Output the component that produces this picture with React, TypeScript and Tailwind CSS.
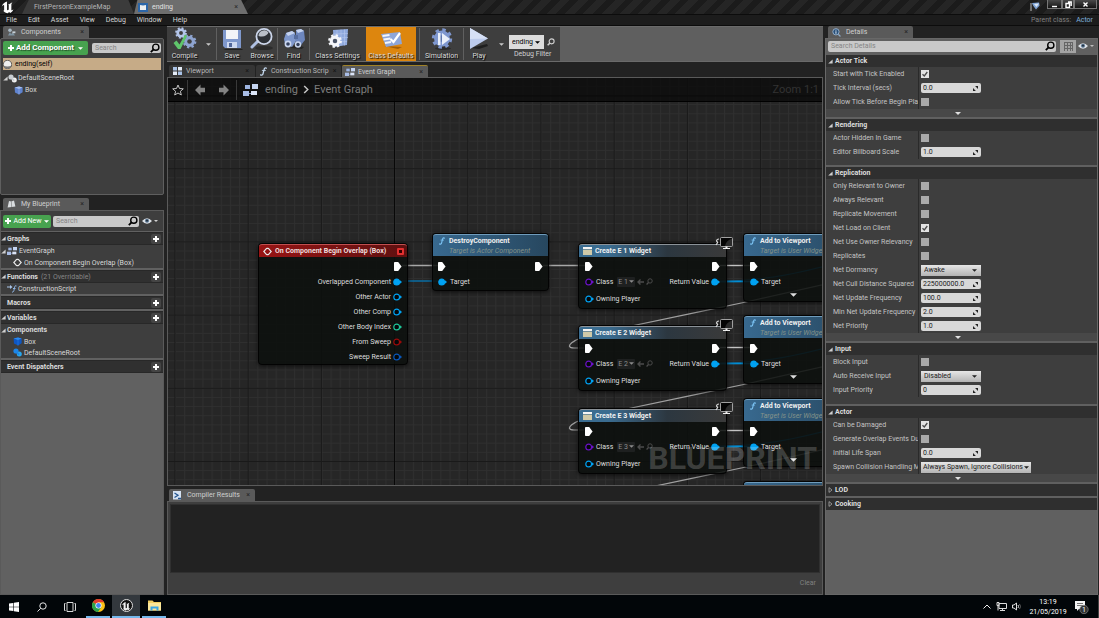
import type { ReactNode } from 'react'

const PIN_COLORS = {
  object: '#00a2f2',
  integer: '#1fc79a',
  boolean: '#9b0a0a',
  struct: '#0a57b8',
  class: '#6b12c9',
}

type PinKind = keyof typeof PIN_COLORS

interface Property {
  label: string
  kind: 'check' | 'number' | 'select'
  value?: string
  checked?: boolean
  wide?: boolean
}

const ACTOR_TICK: Property[] = [
  { label: 'Start with Tick Enabled', kind: 'check', checked: true },
  { label: 'Tick Interval (secs)', kind: 'number', value: '0.0' },
  { label: 'Allow Tick Before Begin Play', kind: 'check' },
]

const RENDERING: Property[] = [
  { label: 'Actor Hidden In Game', kind: 'check' },
  { label: 'Editor Billboard Scale', kind: 'number', value: '1.0' },
]

const REPLICATION: Property[] = [
  { label: 'Only Relevant to Owner', kind: 'check' },
  { label: 'Always Relevant', kind: 'check' },
  { label: 'Replicate Movement', kind: 'check' },
  { label: 'Net Load on Client', kind: 'check', checked: true },
  { label: 'Net Use Owner Relevancy', kind: 'check' },
  { label: 'Replicates', kind: 'check' },
  { label: 'Net Dormancy', kind: 'select', value: 'Awake' },
  { label: 'Net Cull Distance Squared', kind: 'number', value: '225000000.0' },
  { label: 'Net Update Frequency', kind: 'number', value: '100.0' },
  { label: 'Min Net Update Frequency', kind: 'number', value: '2.0' },
  { label: 'Net Priority', kind: 'number', value: '1.0' },
]

const INPUT: Property[] = [
  { label: 'Block Input', kind: 'check' },
  { label: 'Auto Receive Input', kind: 'select', value: 'Disabled' },
  { label: 'Input Priority', kind: 'number', value: '0' },
]

const ACTOR: Property[] = [
  { label: 'Can be Damaged', kind: 'check', checked: true },
  { label: 'Generate Overlap Events During Level Streaming', kind: 'check' },
  { label: 'Initial Life Span', kind: 'number', value: '0.0' },
  { label: 'Spawn Collision Handling Method', kind: 'select', value: 'Always Spawn, Ignore Collisions', wide: true },
]

/* ---------- small glyphs ---------- */

function Caret({ className = 'h-[3px] w-[6px]' }: { className?: string }) {
  return (
    <svg viewBox="0 0 6 3" className={`shrink-0 ${className}`} fill="currentColor" aria-hidden>
      <path d="M0 0h6L3 3z" />
    </svg>
  )
}

function Expanded() {
  return (
    <svg viewBox="0 0 5 5" className="size-[5px] shrink-0" fill="#cfcfcf" aria-hidden>
      <path d="M4.6.4v4.2H.2z" />
    </svg>
  )
}

function Collapsed() {
  return (
    <svg viewBox="0 0 5 6" className="h-[6px] w-[5px] shrink-0" fill="none" stroke="#a8a8a8" strokeWidth=".8" aria-hidden>
      <path d="M1 .6v4.8L4 3z" />
    </svg>
  )
}

function Magnifier({ className = 'size-[10px]' }: { className?: string }) {
  return (
    <svg viewBox="0 0 10 10" className={`shrink-0 ${className}`} fill="none" stroke="currentColor" aria-hidden>
      <circle cx="5.8" cy="4.2" r="3.1" strokeWidth="1.4" />
      <path d="M3.6 6.4L.8 9.2" strokeWidth="1.8" />
    </svg>
  )
}

function Eye() {
  return (
    <svg viewBox="0 0 10 6" className="h-[6px] w-[10px] shrink-0" aria-hidden>
      <path d="M0 3Q5-2.6 10 3 5 8.6 0 3z" fill="#dfe3e8" />
      <circle cx="5" cy="2.8" r="2" fill="#54708c" />
      <circle cx="5" cy="2.6" r=".9" fill="#1b2530" />
    </svg>
  )
}

function Plus() {
  return (
    <svg viewBox="0 0 6 6" className="size-[6px] shrink-0" fill="#fff" aria-hidden>
      <path d="M2 0h2v2h2v2H4v2H2V4H0V2h2z" />
    </svg>
  )
}

function GraphIcon({ className = 'h-[8px] w-[10px]' }: { className?: string }) {
  return (
    <svg viewBox="0 0 15 12" className={`shrink-0 ${className}`} aria-hidden>
      <path d="M2 3.5h5M4 9.5h6" stroke="#7d93bd" strokeWidth="1" />
      <rect x="2" y="1" width="5" height="4" fill="#9db4e0" />
      <rect x="9" y="0" width="6" height="5" fill="#c5d4f0" />
      <rect x="0" y="7" width="6" height="5" fill="#a9bde6" />
      <rect x="8" y="7" width="6" height="4" fill="#dbe4f7" />
    </svg>
  )
}

function ViewportIcon() {
  return (
    <svg viewBox="0 0 9 8" className="h-[8px] w-[9px] shrink-0" aria-hidden>
      <rect width="4" height="3.5" fill="#a9c2e6" />
      <rect x="5" width="4" height="3.5" fill="#e4ecf7" />
      <rect y="4.5" width="4" height="3.5" fill="#e4ecf7" />
      <rect x="5" y="4.5" width="4" height="3.5" fill="#a9c2e6" />
    </svg>
  )
}

function FunctionIcon({ color = '#a9cdf0', className = 'h-[9px] w-[7px]' }: { color?: string; className?: string }) {
  return (
    <svg viewBox="0 0 8 10" className={`shrink-0 ${className}`} fill="none" stroke={color} strokeLinecap="round" aria-hidden>
      <path d="M7.4 1.2C6 .2 5 1 4.6 3L3.5 7.4C3.1 9 2 9.7.7 8.9" strokeWidth="1.5" />
      <path d="M2.6 3.8h3.6" strokeWidth="1" />
    </svg>
  )
}

function EventIcon({ className = 'size-[9px]' }: { className?: string }) {
  return (
    <svg viewBox="0 0 10 10" className={`shrink-0 ${className}`} fill="none" stroke="#e8e8e8" strokeWidth="1.3" aria-hidden>
      <path d="M4 1.5L.9 5 4 8.5M6 1.5L9.1 5 6 8.5M4 1.5h2M4 8.5h2" />
    </svg>
  )
}

function BookIcon() {
  return (
    <svg viewBox="0 0 9 8" className="h-[8px] w-[9px] shrink-0" aria-hidden>
      <path d="M2 1l2.4.6L7 .6l1.4 6L4.6 7 .6 7.4z" fill="#d9dcdf" />
      <path d="M4.4 1.6L4.6 7" stroke="#777" strokeWidth=".6" />
    </svg>
  )
}

function ComponentsIcon() {
  return (
    <svg viewBox="0 0 9 8" className="h-[8px] w-[9px] shrink-0" aria-hidden>
      <path d="M1 7.4L3 4l1 2 2-1.4 2 2.8z" fill="#7e93a1" />
      <circle cx="3" cy="2.2" r="1.8" fill="#a9bac4" />
      <path d="M5.4 3.4h3v1.8h-3z" fill="#c7d0d6" />
    </svg>
  )
}

function InfoIcon() {
  return (
    <svg viewBox="0 0 10 10" className="size-[9px] shrink-0" aria-hidden>
      <circle cx="4.4" cy="4.2" r="3.5" fill="#284f78" stroke="#9cb7d3" />
      <path d="M4.4 2v.9M4.4 3.6v2.8" stroke="#e2ecf6" strokeWidth="1.1" />
      <path d="M7 7l2.4 2.4" stroke="#8ea9c4" strokeWidth="1.4" />
    </svg>
  )
}

function SceneRootIcon({ light, dark }: { light: string; dark: string }) {
  return (
    <svg viewBox="0 0 9 9" className="size-[9px] shrink-0" aria-hidden>
      <circle cx="3" cy="3" r="2.6" fill={light} />
      <circle cx="6.3" cy="6" r="2.5" fill={dark} />
      <path d="M3 3.6l3.2 3" stroke={light} strokeWidth="1.6" />
    </svg>
  )
}

function BoxIcon({ top, side }: { top: string; side: string }) {
  return (
    <svg viewBox="0 0 9 9" className="size-[9px] shrink-0" aria-hidden>
      <path d="M.6 1.6L5 .6l3.6 1v4.6L5 8.6 1 6.6z" fill={side} />
      <path d="M.6 1.6L5 .6l3.6 1L5 3z" fill={top} />
      <path d="M5 3v5.6" stroke={top} strokeWidth=".5" />
    </svg>
  )
}

function UnrealLogo({ className }: { className: string }) {
  return (
    <svg viewBox="0 0 20 20" className={className} fill="currentColor" aria-hidden>
      <path d="M9.4 2C5.6 3 2.4 6 1.6 9.6c1-1.6 2.2-2.8 3-2.6.5.1.6.6.6 1.3v6c0 .9-.6 1.1-1.3 1 1.6 2.2 4 3.5 6.6 3.6l1.7-1.7 1.7 1.4c2.2-1 3.8-3 4.5-5.3-.9.9-1.7 1.5-2.3 1.5-.4 0-.6-.3-.6-.8V6.6c0-1 .6-2 1.5-3-1.7.2-3.5 1.4-4.4 2.6-.3-.4-.9-.6-1.5-.6.5.5.7 1 .7 1.7v6.3c-.5.6-1.1 1-1.6 1-.6 0-.9-.4-.9-1.1V5.3C9.3 4.2 9 3 9.4 2z" />
    </svg>
  )
}

/* ---------- toolbar artwork ---------- */

function Gear({ x, y, r, fill, hole }: { x: number; y: number; r: number; fill: string; hole: string }) {
  const tooth = (2 * Math.PI * r) / 16
  return (
    <g>
      <circle cx={x} cy={y} r={r} fill={fill} />
      <circle cx={x} cy={y} r={r} fill="none" stroke={fill} strokeWidth={r * 0.55} strokeDasharray={`${tooth} ${tooth}`} />
      <circle cx={x} cy={y} r={r * 0.42} fill={hole} />
    </g>
  )
}

function CompileArt() {
  return (
    <svg viewBox="0 0 26 24" className="h-6 w-[26px]" aria-hidden>
      <Gear x={9} y={6} r={4.6} fill="#b4c6ea" hole="#3e3e3e" />
      <Gear x={17.5} y={14.5} r={5.4} fill="#8ea4d0" hole="#3e3e3e" />
      <path d="M1.5 16l3-2.5 3 4L13 7.5l2 1.5L8.5 22H6z" fill="#5fc56b" />
    </svg>
  )
}

function SaveArt() {
  return (
    <svg viewBox="0 0 24 24" className="size-6" aria-hidden>
      <path d="M3 22h19l1 1H6z" fill="#222" />
      <path d="M3 3h18v18H5l-2-2z" fill="#7f98cc" />
      <path d="M6 3h12v9H6z" fill="#f2f4f8" />
      <path d="M7 15h10v6H7z" fill="#cdd8ef" />
      <path d="M9 16h3v4H9z" fill="#51679a" />
    </svg>
  )
}

function BrowseArt() {
  return (
    <svg viewBox="0 0 24 24" className="size-6" aria-hidden>
      <ellipse cx="14" cy="21" rx="9" ry="2" fill="#2b2b2b" />
      <path d="M7.5 14.5L2 20" stroke="#aebfe2" strokeWidth="3" strokeLinecap="round" />
      <circle cx="14" cy="9.5" r="7.6" fill="#2c3036" stroke="#ccd6ea" strokeWidth="1.8" />
      <path d="M8.5 9a5.6 5.6 0 0110-3.5c-1 3-5 5-10 3.5z" fill="#b9bfc9" />
    </svg>
  )
}

// two barrels leaning to the left, lenses towards the viewer
function FindArt() {
  return (
    <svg viewBox="0 0 24 24" className="size-6" aria-hidden>
      <path d="M8 21l12 1 2-2-8-2z" fill="#262626" />
      <path d="M14 3l5-1 3 2 1 9-4 5-5-1z" fill="#6d86bd" />
      <path d="M14 3l5-1 3 2-6 2z" fill="#c4d2ef" />
      <path d="M4 6l6-2 3 2 1 8-4 6-7-3-1-5z" fill="#7e97cc" />
      <path d="M4 6l6-2 3 2-7 3z" fill="#c4d2ef" />
      <path d="M12 8h4v4h-4z" fill="#566d9f" />
      <circle cx="6" cy="17" r="3.4" fill="#c9d6ef" />
      <circle cx="6" cy="17" r="1.8" fill="#34415f" />
      <circle cx="16" cy="17.5" r="3.2" fill="#c9d6ef" />
      <circle cx="16" cy="17.5" r="1.7" fill="#34415f" />
    </svg>
  )
}

function SettingsArt() {
  return (
    <svg viewBox="0 0 24 24" className="size-6" aria-hidden>
      <path d="M7 3l15-1-1 16-13 2z" fill="#8fa9dd" />
      <path d="M11 3v16M15 2.5v16M18.5 2.5v16M7 7l15-.5M7 11l15-.5M8 15l13-.5" stroke="#b7c8ec" strokeWidth=".6" />
      <Gear x={9} y={14} r={5.4} fill="#f4f6fa" hole="#4a5468" />
    </svg>
  )
}

function DefaultsArt() {
  return (
    <svg viewBox="0 0 24 24" className="size-6" aria-hidden>
      <path d="M5 19l14 3 4-2z" fill="#a45f08" />
      <path d="M2 7l19-2 2 12-16 3z" fill="#8ea6d8" />
      <path d="M3.5 9l7-1M4.5 12.5l7-1M6 16l6-1" stroke="#f3f6fc" strokeWidth="1.8" />
      <path d="M11.5 12l3 3 6.5-9" fill="none" stroke="#fff" strokeWidth="2.2" />
    </svg>
  )
}

function SimulationArt() {
  return (
    <svg viewBox="0 0 24 24" className="size-6" aria-hidden>
      <ellipse cx="13" cy="21.5" rx="8" ry="1.5" fill="#2a2a2a" />
      <Gear x={12} y={11.5} r={8} fill="#7e97cf" hole="#5d76af" />
      <path d="M8 6h2.5v12H8zM12 6l8 6-8 6z" fill="#e9effa" />
    </svg>
  )
}

function PlayArt() {
  return (
    <svg viewBox="0 0 24 24" className="size-6" aria-hidden>
      <path d="M4 21l16-4 1 2-9 3z" fill="#1f1f1f" />
      <path d="M3 1l18 10.5L3 22z" fill="#bccbec" />
      <path d="M3 1l18 10.5L3 12z" fill="#d6e0f5" />
    </svg>
  )
}

/* ---------- shared panel parts ---------- */

function PanelTab({ icon, title, className }: { icon: ReactNode; title: string; className: string }) {
  return (
    <div className={`flex h-[12px] items-center gap-[5px] rounded-t-[2px] bg-[#5a5a5a] pl-1 pr-[5px] text-[#cfcfcf] ${className}`}>
      {icon}
      <span className="flex-1 whitespace-nowrap">{title}</span>
      <button type="button" aria-label={`Close ${title}`} className="text-[7px] leading-none text-[#252525]">
        ×
      </button>
    </div>
  )
}

function SearchBox({ placeholder, className }: { placeholder: string; className: string }) {
  return (
    <label className={`flex items-center rounded-[2px] bg-[#c9c9c9] pl-[3px] pr-px text-black ${className}`}>
      <input
        type="text"
        aria-label={placeholder}
        placeholder={placeholder}
        className="w-0 min-w-0 flex-1 bg-transparent outline-none placeholder:text-[#858585]"
      />
      <Magnifier />
    </label>
  )
}

/* ---------- left column ---------- */

function ComponentsPanel() {
  return (
    <section className="flex flex-col">
      <PanelTab icon={<ComponentsIcon />} title="Components" className="ml-[3px] w-[86px]" />
      <div className="h-[157px] rounded-[2px] border border-[#5f5f5f] bg-[#3e3e3e] p-[2px]">
        <div className="flex gap-1">
          <button
            type="button"
            className="flex h-[14px] w-[85px] items-center justify-center gap-[2px] rounded-[2px] bg-[#47a24f] text-[8px] font-bold whitespace-nowrap text-white [text-shadow:1px_1px_1px_#0008]"
          >
            <Plus /> Add Component <Caret className="ml-[2px] h-[3px] w-[5px]" />
          </button>
          <SearchBox placeholder="Search" className="my-[2px] flex-1" />
        </div>
        <div className="mt-[3px] flex h-3 items-center gap-[3px] bg-[#c6ab87] text-black">
          <svg viewBox="0 0 9 9" className="size-[9px]" aria-hidden>
            <circle cx="4.5" cy="4.5" r="4.2" fill="#eee" stroke="#333" strokeWidth=".7" />
            <path d="M.4 5.5q4 2 8.2 0-1 3-4.1 3.2Q1.4 8.5.4 5.5z" fill="#777" />
          </svg>
          ending(self)
        </div>
        <div className="mt-[2px] flex h-3 items-center text-[#d8d8d8]">
          <Expanded />
          <SceneRootIcon light="#c9ced3" dark="#f2f2f2" />
          <span className="ml-px">DefaultSceneRoot</span>
        </div>
        <div className="flex h-3 items-center gap-[2px] pl-[11px] text-[#d8d8d8]">
          <BoxIcon top="#a9c0ee" side="#5f83cf" />
          Box
        </div>
      </div>
    </section>
  )
}

function GroupHeader({ title, note, open = true }: { title: string; note?: string; open?: boolean }) {
  return (
    <div className="flex h-[13px] items-center border-y border-[#282828] bg-[#303030] pr-[2px] font-bold text-[#dcdcdc]">
      <span className="flex w-[6px]">{open && <Expanded />}</span>
      {title}
      {note && <span className="ml-[3px] font-normal text-[#868686]">{note}</span>}
      <button type="button" aria-label={`Add to ${title}`} className="ml-auto flex size-[10px] items-center justify-center rounded-[2px] bg-[#454545]">
        <Plus />
      </button>
    </div>
  )
}

function MyBlueprintPanel() {
  return (
    <section className="flex min-h-0 flex-1 flex-col">
      <PanelTab icon={<BookIcon />} title="My Blueprint" className="ml-[3px] w-[86px]" />
      <div className="flex flex-1 flex-col border border-[#5a5a5a] bg-[#616161]">
        <div className="mb-px flex h-5 items-center gap-[2px] bg-[#3e3e3e] pl-[2px]">
          <button
            type="button"
            className="flex h-[13px] w-[48px] items-center justify-center gap-[2px] rounded-[2px] bg-[#47a24f] text-white"
          >
            <Plus /> Add New <Caret className="h-[3px] w-[5px]" />
          </button>
          <SearchBox placeholder="Search" className="h-[11px] w-[86px]" />
          <button type="button" aria-label="View options" className="ml-px flex items-center gap-[2px] text-[#d0d0d0]">
            <Eye />
            <Caret className="h-[2px] w-[4px]" />
          </button>
        </div>

        <div className="flex flex-col gap-[2px] text-[#d8d8d8]">
          <div className="bg-[#3e3e3e]">
            <GroupHeader title="Graphs" />
            <div className="flex h-3 items-center gap-px">
              <Expanded />
              <GraphIcon />
              <span className="ml-px">EventGraph</span>
            </div>
            <div className="flex h-[11px] items-center gap-[2px] pl-3">
              <EventIcon />
              On Component Begin Overlap (Box)
            </div>
          </div>
          <div className="bg-[#3e3e3e]">
            <GroupHeader title="Functions" note="(21 Overridable)" />
            <div className="flex h-[11px] items-center gap-px pl-[6px]">
              <svg viewBox="0 0 10 9" className="h-[9px] w-[10px]" aria-hidden>
                <path d="M0 2.5h3V1l2.5 2L3 5V3.6H0z" fill="#a9c5ea" />
                <path d="M9.5 2C8 1.2 7.7 2.4 7.3 4.5 7 7 6.5 8.6 5 8M6 4.5h2.5" fill="none" stroke="#8fb4e3" />
              </svg>
              ConstructionScript
            </div>
          </div>
          <GroupHeader title="Macros" open={false} />
          <div className="bg-[#3e3e3e]">
            <GroupHeader title="Variables" />
            <div className="flex h-3 items-center gap-px font-bold">
              <Expanded />
              Components
            </div>
            <div className="flex h-[11px] items-center gap-[2px] pl-3">
              <BoxIcon top="#2b8bf0" side="#0d56c4" />
              Box
            </div>
            <div className="flex h-[11px] items-center gap-[2px] pl-3">
              <SceneRootIcon light="#1d86e8" dark="#28a7ee" />
              DefaultSceneRoot
            </div>
          </div>
          <GroupHeader title="Event Dispatchers" open={false} />
        </div>
      </div>
    </section>
  )
}

/* ---------- toolbar ---------- */

function ToolButton({ label, className, children }: { label: string; className: string; children: ReactNode }) {
  return (
    <button
      type="button"
      className={`flex flex-col items-center justify-end whitespace-nowrap text-[#dadada] [text-shadow:1px_1px_1px_#000] ${className}`}
    >
      {children}
      <span>{label}</span>
    </button>
  )
}

function ToolDivider() {
  return <span className="my-px w-px shrink-0 bg-[#606060]" />
}

function Toolbar() {
  return (
    <div className="flex h-[36px] border-y border-[#6a6a6a] bg-[#5f5f5f]">
      <div className="flex bg-[#3e3e3e] pl-px">
        <ToolButton label="Compile" className="w-[33px]">
          <CompileArt />
        </ToolButton>
        <button type="button" aria-label="Compile options" className="w-[15px] pl-[5px] text-[#c8c8c8]">
          <Caret className="h-[3px] w-[5px]" />
        </button>
        <ToolDivider />
        <ToolButton label="Save" className="w-[30px]">
          <SaveArt />
        </ToolButton>
        <ToolButton label="Browse" className="w-[30px]">
          <BrowseArt />
        </ToolButton>
        <ToolDivider />
        <ToolButton label="Find" className="w-[31px]">
          <FindArt />
        </ToolButton>
        <ToolDivider />
        <ToolButton label="Class Settings" className="w-[55px]">
          <SettingsArt />
        </ToolButton>
        <span className="w-px" />
        <ToolButton label="Class Defaults" className="w-[50px] bg-[#dd860e]">
          <DefaultsArt />
        </ToolButton>
        <span className="w-[3px]" />
        <ToolDivider />
        <ToolButton label="Simulation" className="w-[43px]">
          <SimulationArt />
        </ToolButton>
        <ToolDivider />
        <ToolButton label="Play" className="w-[30px]">
          <PlayArt />
        </ToolButton>
        <button type="button" aria-label="Play options" className="w-[15px] pl-[5px] text-[#c8c8c8]">
          <Caret className="h-[3px] w-[5px]" />
        </button>
        <label className="flex w-[51px] flex-col items-start pt-[8px] text-[#d0d0d0]">
          <span className="flex items-center gap-[3px]">
            <span className="flex h-[14px] w-[35px] items-center bg-[#dcdcdc] pl-[3px] pr-1 text-black">
              <select aria-label="Debug Filter" className="min-w-0 flex-1 appearance-none bg-transparent outline-none">
                <option>ending</option>
              </select>
              <Caret className="h-[3px] w-[5px]" />
            </span>
            <Magnifier className="size-[8px]" />
          </span>
          <span className="pl-[5px] whitespace-nowrap">Debug Filter</span>
        </label>
      </div>
    </div>
  )
}

/* ---------- graph ---------- */

function ExecPin() {
  return (
    <svg viewBox="0 0 8 9" className="h-[9px] w-[8px] shrink-0" fill="#fff" aria-hidden>
      <path d="M.8 0h3.4L7.6 4.5 4.2 9H.8Q0 9 0 8.2V.8Q0 0 .8 0z" />
    </svg>
  )
}

function DataPin({ kind, connected = false }: { kind: PinKind; connected?: boolean }) {
  const color = PIN_COLORS[kind]
  return (
    <svg viewBox="0 0 9 8" className="h-[8px] w-[9px] shrink-0" aria-hidden>
      <circle cx="3.7" cy="4" r="2.9" fill={connected ? color : '#05080a'} stroke={color} strokeWidth="1.2" />
      <path d="M7 2.3L9 4 7 5.7z" fill={color} />
    </svg>
  )
}

function NodeShell({ className, children }: { className: string; children: ReactNode }) {
  return (
    <article
      className={`absolute rounded-[4px] border border-black/80 bg-[#0c0f0ddd] text-[#dedede] shadow-[0_1px_4px_#000a] ${className}`}
    >
      {children}
    </article>
  )
}

function OverlapEventNode() {
  const outputs: { label: string; kind: PinKind; connected?: boolean }[] = [
    { label: 'Overlapped Component', kind: 'object', connected: true },
    { label: 'Other Actor', kind: 'object' },
    { label: 'Other Comp', kind: 'object' },
    { label: 'Other Body Index', kind: 'integer' },
    { label: 'From Sweep', kind: 'boolean' },
    { label: 'Sweep Result', kind: 'struct' },
  ]
  return (
    <NodeShell className="left-[90px] top-[165px] w-[150px]">
      <header className="flex h-[13px] items-center gap-[3px] rounded-t-[3px] border-t border-[#c05050] bg-linear-to-r from-[#981414] to-[#5e1010] pl-1 pr-[3px] font-bold text-[#f0dede]">
        <EventIcon />
        <span className="flex-1 whitespace-nowrap">On Component Begin Overlap (Box)</span>
        <span className="size-[7px] rounded-[1px] border-2 border-[#e23030] bg-[#300]" />
      </header>
      <div className="flex flex-col pr-[5px] pt-[2px]">
        <div className="flex h-[15px] items-center justify-end">
          <ExecPin />
        </div>
        {outputs.map((pin) => (
          <div key={pin.label} className="flex h-[15px] items-center justify-end gap-[2px]">
            {pin.label}
            <DataPin kind={pin.kind} connected={pin.connected} />
          </div>
        ))}
      </div>
    </NodeShell>
  )
}

function FunctionHeader({ title, target }: { title: string; target: string }) {
  return (
    <header className="flex h-[22px] gap-[4px] overflow-hidden rounded-t-[3px] border-t border-[#6f9cbc] bg-linear-to-r from-[#38698f] to-[#27475f] pt-px pl-[6px] whitespace-nowrap">
      <FunctionIcon color="#7cc4f5" className="h-[10px] w-[6px]" />
      <div className="flex flex-col leading-[10px]">
        <span className="font-bold text-[#f0f0f0]">{title}</span>
        <span className="text-[#84938a] italic">{target}</span>
      </div>
    </header>
  )
}

function DestroyNode() {
  return (
    <NodeShell className="left-[264px] top-[155px] w-[117px] pb-px">
      <FunctionHeader title="DestroyComponent" target="Target is Actor Component" />
      <div className="flex flex-col px-[5px] pt-[3px]">
        <div className="flex h-[15px] items-center justify-between">
          <ExecPin />
          <ExecPin />
        </div>
        <div className="flex h-[15px] items-center gap-[3px]">
          <DataPin kind="object" connected />
          Target
        </div>
      </div>
    </NodeShell>
  )
}

function CreateWidgetNode({ name, className }: { name: string; className: string }) {
  return (
    <NodeShell className={`left-[410px] w-[149px] ${className}`}>
      <header className="flex h-[13px] items-center gap-[3px] rounded-t-[3px] border-t border-[#8b9298] bg-linear-to-r from-[#3a6c90] from-20% via-[#2c3740] via-60% to-[#3a3a3a] pl-1 font-bold text-[#f0f0f0]">
        <svg viewBox="0 0 9 8" className="h-[8px] w-[9px]" aria-hidden>
          <rect width="9" height="2" fill="#f5f5f5" />
          <rect y="2.6" width="9" height="5.4" fill="#cfc9a8" />
        </svg>
        Create {name} Widget
      </header>
      <svg viewBox="0 0 18 14" className="absolute -top-[8px] right-[-7px] h-[14px] w-[18px]" aria-hidden>
        <path d="M4 3C1 3 1 6 3 6M1 9l2-3" fill="none" stroke="#ddd" strokeWidth="1.2" />
        <rect x="5.5" y="1.5" width="12" height="9" rx="1" fill="#050505" stroke="#c4c4c4" strokeWidth=".8" />
        <path d="M10 10C11 6 13 4 17 2.5V10z" fill="#2b2b2b" />
        <path d="M11.5 10.5V12" stroke="#eee" strokeWidth="2" />
        <path d="M8 12.5h7" stroke="#eee" />
      </svg>
      <div className="flex flex-col px-[6px] pt-[2px]">
        <div className="flex h-[15px] items-center justify-between">
          <ExecPin />
          <ExecPin />
        </div>
        <div className="flex h-[15px] items-center gap-[2px]">
          <DataPin kind="class" />
          <label className="flex items-center gap-1">
            Class
            <span className="flex h-[10px] w-[18px] items-center rounded-[1px] bg-[#1e2020] px-px text-[#8b8b8b]">
              <select className="min-w-0 flex-1 appearance-none bg-transparent outline-none">
                <option>{name}</option>
              </select>
              <Caret className="h-[3px] w-[5px]" />
            </span>
          </label>
          <svg viewBox="0 0 7 6" className="h-[6px] w-[7px] text-[#4c4c4c]" fill="none" stroke="currentColor" strokeWidth="1.4" aria-hidden>
            <path d="M7 3H1M3.5.5L1 3l2.5 2.5" />
          </svg>
          <Magnifier className="size-[7px] text-[#4c4c4c]" />
          <span className="ml-auto flex items-center gap-[2px] whitespace-nowrap">
            Return Value
            <DataPin kind="object" connected />
          </span>
        </div>
        <div className="flex h-[19px] items-center gap-[2px]">
          <DataPin kind="object" />
          Owning Player
        </div>
      </div>
    </NodeShell>
  )
}

function AddToViewportNode({ className }: { className: string }) {
  return (
    <NodeShell className={`left-[575px] w-[117px] ${className}`}>
      <FunctionHeader title="Add to Viewport" target="Target is User Widget" />
      <div className="flex flex-col px-[6px] pt-[3px]">
        <div className="flex h-[15px] items-center justify-between">
          <ExecPin />
          <ExecPin />
        </div>
        <div className="flex h-[15px] items-center gap-[2px]">
          <DataPin kind="object" connected />
          Target
        </div>
        <div className="flex h-[12px] items-center pl-[40px]">
          <Caret className="h-[4px] w-[7px]" />
        </div>
      </div>
    </NodeShell>
  )
}

const ROW_OFFSETS = [0, 82, 165]

function Wires() {
  return (
    <svg className="absolute inset-0 size-full" aria-hidden>
      <defs>
        <pattern id="minor" x="7" y="17" width="9.15" height="9.15" patternUnits="userSpaceOnUse">
          <path d="M0 .5h9.15M.5 0v9.15" stroke="#2f2f2f" strokeWidth="1" />
        </pattern>
        <pattern id="major" x="6.5" y="17" width="73.2" height="73.2" patternUnits="userSpaceOnUse">
          <path d="M0 .5h73.2M.5 0v73.2" stroke="#191919" strokeWidth="1" />
        </pattern>
      </defs>
      <rect width="100%" height="100%" fill="#262626" />
      <rect width="100%" height="100%" fill="url(#minor)" />
      <rect width="100%" height="100%" fill="url(#major)" />
      <path d="M226.5 0v600M0 18h900" stroke="#080808" />
      <g fill="none">
        <path d="M234 187.5h36M375 187.5h42" stroke="#a8a8a8" strokeWidth="1.4" />
        <path d="M234 203h36" stroke="#0a6ea5" strokeWidth="1.6" />
        {ROW_OFFSETS.map((dy) => (
          <g key={dy} transform={`translate(0 ${dy})`}>
            <path d="M552 187.5h30" stroke="#c4c4c4" strokeWidth="1.4" />
            <path d="M552 203.5h30" stroke="#0096e0" strokeWidth="1.6" />
            <path d="M552 203.5C600 202 630 196 680 182" stroke="#0e6a9c" strokeWidth="1.2" />
            <path
              d="M680 201L578 224C530 234 460 249 430 255C402 261 396 270 406 270H416"
              stroke="#a0a0a0"
              strokeWidth="1.2"
            />
          </g>
        ))}
      </g>
    </svg>
  )
}

function Breadcrumb() {
  return (
    <nav className="relative flex h-[24px] items-center border-b border-black bg-[#0b0b0bcc] pl-1 text-[11px] text-[#7c7c7c]">
      <svg viewBox="0 0 12 12" className="size-[12px]" fill="none" stroke="#c4c4c4" aria-hidden>
        <path d="M6 1l1.5 3.5 3.8.3-2.9 2.5.9 3.7L6 9l-3.3 2 .9-3.7L.7 4.8l3.8-.3z" />
      </svg>
      <span className="ml-[3px] h-5 w-px bg-[#3a3a3a]" />
      {['Back', 'Forward'].map((dir) => (
        <button key={dir} type="button" aria-label={dir} className="flex w-6 justify-center">
          <svg viewBox="0 0 10 12" className={`h-[12px] w-[10px] ${dir === 'Forward' ? '-scale-x-100' : ''}`} fill="#838383" aria-hidden>
            <path d="M0 6l5.5-5.5v3.3H10v4.4H5.5v3.3z" />
          </svg>
        </button>
      ))}
      <span className="mr-[6px] h-5 w-px bg-[#3a3a3a]" />
      <GraphIcon className="mr-[7px] h-[12px] w-[15px]" />
      <a href="#ending">ending</a>
      <svg viewBox="0 0 6 10" className="mx-[5px] h-[9px] w-[6px]" fill="none" stroke="#c8c8c8" strokeWidth="1.6" aria-hidden>
        <path d="M1 1l4 4-4 4" />
      </svg>
      <a href="#event-graph">Event Graph</a>
      <span className="ml-auto pr-[3px] text-[#333]">Zoom 1:1</span>
    </nav>
  )
}

function GraphArea() {
  return (
    <section className="flex min-h-0 flex-1 flex-col">
      <div className="flex h-[12px] items-stretch gap-px text-[#b8b8b8]">
        {[
          { title: 'Viewport', icon: <ViewportIcon />, width: 'w-[86px]' },
          { title: 'Construction Scrip', icon: <FunctionIcon color="#c4d8ee" />, width: 'w-[85px]' },
        ].map((tab) => (
          <div key={tab.title} className={`flex items-center gap-1 rounded-t-[2px] bg-[#353535] pl-1 pr-[6px] first:ml-[2px] ${tab.width}`}>
            {tab.icon}
            <span className="flex-1 whitespace-nowrap">{tab.title}</span>
            <span className="text-[#151515]">×</span>
          </div>
        ))}
        <div className="flex w-[86px] items-center gap-[3px] rounded-t-[2px] border-t border-[#a08227] bg-[#5a5a5a] pl-[3px] pr-[5px] text-[#cfcfcf]">
          <GraphIcon />
          <span className="flex-1 whitespace-nowrap">Event Graph</span>
          <span className="text-[#252525]">×</span>
        </div>
      </div>
      <div className="relative min-h-0 flex-1 overflow-hidden border border-[#5a5a5a]">
        <Wires />
        <OverlapEventNode />
        <DestroyNode />
        <CreateWidgetNode name="E 1" className="top-[165px]" />
        <CreateWidgetNode name="E 2" className="top-[247px]" />
        <CreateWidgetNode name="E 3" className="top-[330px]" />
        <AddToViewportNode className="top-[155px]" />
        <AddToViewportNode className="top-[237px]" />
        <AddToViewportNode className="top-[320px]" />
        <AddToViewportNode className="top-[403px]" />
        <div className="pointer-events-none absolute right-[5px] bottom-[11px] text-[32px] leading-none font-bold text-white/20">
          BLUEPRINT
        </div>
        <Breadcrumb />
      </div>
    </section>
  )
}

function CompilerResults() {
  return (
    <section>
      <PanelTab
        icon={
          <svg viewBox="0 0 9 9" className="size-[9px] shrink-0" aria-hidden>
            <rect width="8" height="8.5" fill="#d5e2f2" />
            <path d="M1.5 2L5 4.3 1.5 6.5M5 7.5h3" fill="none" stroke="#24558f" strokeWidth="1.3" />
          </svg>
        }
        title="Compiler Results"
        className="ml-[2px] w-[86px]"
      />
      <div className="flex h-[94px] flex-col border border-[#5a5a5a] bg-[#3e3e3e] p-[2px]">
        <div className="flex-1 border border-[#303030] bg-[#222]" />
        <div className="flex h-[19px] items-center justify-end pr-1">
          <button type="button" className="text-[#808080]">
            Clear
          </button>
        </div>
      </div>
    </section>
  )
}

/* ---------- details ---------- */

function PropertyRow({ label, kind, value, checked, wide }: Property) {
  const id = label.toLowerCase().replace(/\W+/g, '-')
  return (
    <div className="flex h-[14px] items-center">
      <label htmlFor={id} className="w-[85px] shrink-0 overflow-hidden whitespace-nowrap">
        {label}
      </label>
      <div className="flex h-full items-center border-l border-[#2a2a2a] pl-[2px] text-[#202020]">
        {kind === 'check' && (
          <span className="relative flex">
            <input
              id={id}
              type="checkbox"
              defaultChecked={checked}
              className="peer size-[8px] appearance-none bg-[#a9a9a9] checked:bg-[#e2e2e2]"
            />
            <svg viewBox="0 0 8 8" className="pointer-events-none absolute inset-0 hidden size-[8px] peer-checked:block" fill="none" stroke="#4a4a4a" strokeWidth="1.3" aria-hidden>
              <path d="M1.5 4.2l1.8 1.8 3-4" />
            </svg>
          </span>
        )}
        {kind === 'number' && (
          <span className="flex h-[10px] w-[60px] items-center rounded-[2px] bg-[#d8d8d8] pl-[2px] pr-[3px]">
            <input id={id} type="text" defaultValue={value} className="w-0 min-w-0 flex-1 bg-transparent outline-none" />
            <svg viewBox="0 0 6 6" className="size-[5px]" fill="#222" aria-hidden>
              <path d="M2.5 0H6v3.5zM0 2.5L3.5 6H0z" />
            </svg>
          </span>
        )}
        {kind === 'select' && (
          <span
            className={`flex h-[11px] items-center bg-linear-to-b from-[#e6e6e6] to-[#b4b4b4] ${wide ? 'w-[110px] px-[2px]' : 'w-[60px] pl-[3px] pr-1'}`}
          >
            <select id={id} className="w-0 min-w-0 flex-1 appearance-none bg-transparent outline-none">
              <option>{value}</option>
            </select>
            <Caret className="h-[3px] w-[5px]" />
          </span>
        )}
      </div>
    </div>
  )
}

function Category({ title, rows, more = false, pad = '' }: { title: string; rows?: Property[]; more?: boolean; pad?: string }) {
  return (
    <section className="bg-[#3e3e3e]">
      <h2 className="flex h-[12px] items-center gap-[2px] bg-[#2f2f2f] pl-[2px] font-bold text-[#dedede]">
        {rows ? <Expanded /> : <Collapsed />}
        {title}
      </h2>
      {rows && (
        <div className={`pl-[7px] text-[#c4c4c4] ${pad}`}>
          {rows.map((row) => (
            <PropertyRow key={row.label} {...row} />
          ))}
        </div>
      )}
      {more && (
        <button type="button" aria-label={`Show advanced ${title}`} className="flex h-2 w-full items-center justify-center bg-[#484848] pr-2 text-[#e0e0e0]">
          <Caret />
        </button>
      )}
    </section>
  )
}

function DetailsPanel() {
  return (
    <aside className="flex w-[273px] shrink-0 flex-col">
      <PanelTab icon={<InfoIcon />} title="Details" className="ml-[3px] w-[85px]" />
      <div className="flex flex-1 flex-col gap-[2px] border border-[#686868] bg-[#606060]">
        <div className="flex h-[14px] items-center pl-[2px]">
          <SearchBox placeholder="Search Details" className="h-[11px] flex-1" />
          <button type="button" aria-label="Property matrix" className="mr-[2px] ml-1 flex h-[13px] w-[16px] items-center justify-center bg-[#a4a4a4]">
            <svg viewBox="0 0 9 9" className="size-[9px]" stroke="#666" aria-hidden>
              <path d="M0 .5h9M0 3.5h9M0 6.5h9M.5 0v9M3.5 0v9M6.5 0v9M8.5 0v9" />
            </svg>
          </button>
          <button type="button" aria-label="View options" className="flex w-[19px] items-center gap-[2px] text-[#bdbdbd]">
            <Eye />
            <Caret className="h-[2px] w-[4px]" />
          </button>
        </div>
        <Category title="Actor Tick" rows={ACTOR_TICK} more />
        <Category title="Rendering" rows={RENDERING} pad="pb-[6px]" />
        <Category title="Replication" rows={REPLICATION} more />
        <Category title="Input" rows={INPUT} pad="pb-[7px]" />
        <Category title="Actor" rows={ACTOR} more />
        <Category title="LOD" />
        <Category title="Cooking" />
      </div>
    </aside>
  )
}

/* ---------- window chrome ---------- */

function TitleBar() {
  return (
    <header className="flex h-[14px] shrink-0 items-end bg-[repeating-linear-gradient(135deg,#1b1b1b_0_6px,#252525_6px_13px)]">
      <UnrealLogo className="mr-[7px] h-[14px] w-[15px] self-center text-white" />
      <div className="flex h-[14px] w-[112px] items-center bg-[#3b3b3b] pl-3 text-[#b4b4b4] [clip-path:polygon(6%_0,95%_0,100%_100%,0_100%)]">
        FirstPersonExampleMap
      </div>
      <div className="flex h-[14px] w-[114px] items-center gap-1 bg-[#6e6e6e] pl-1 pr-[10px] text-[#e2e2e2] [clip-path:polygon(3%_0,94%_0,100%_100%,0_100%)]">
        <svg viewBox="0 0 10 9" className="h-[9px] w-[10px]" aria-hidden>
          <rect width="10" height="9" fill="#2c66a8" />
          <path d="M2 2l3 .5L8 2v5H2z" fill="#eee" />
        </svg>
        <span className="flex-1">ending</span>
        <span className="text-[#2a2a2a]">×</span>
      </div>
      <div className="ml-auto flex h-full items-start">
        <svg viewBox="0 0 10 9" className="mt-[2px] mr-[7px] h-[9px] w-[10px]" aria-hidden>
          <path d="M1 1v8" stroke="#bbb" />
          <path d="M2 1l7-.5.6 3L6 7.5 3 3.5z" fill="#7fa3d4" />
          <path d="M4 2l5-.5L6.5 5z" fill="#dbe7f7" />
        </svg>
        {[
          { label: 'Minimize', path: 'M1 5.5h5', width: 'w-[15px]' },
          { label: 'Restore', path: 'M1 2.5h3.5v4H1zM3 1h3.2v4', width: 'w-[12px]' },
          { label: 'Close', path: 'M1.5 1.5l4 4M5.5 1.5l-4 4', width: 'w-[23px]' },
        ].map((item) => (
          <button
            key={item.label}
            type="button"
            aria-label={item.label}
            className={`flex h-[9px] items-center justify-center border border-t-0 border-[#777] bg-linear-to-b from-[#4a4a4a] to-[#141414] ${item.width}`}
          >
            <svg viewBox="0 0 7 7" className="size-[7px]" fill="none" stroke="#fff" strokeWidth="1.4" aria-hidden>
              <path d={item.path} />
            </svg>
          </button>
        ))}
        <span className="w-[2px]" />
      </div>
    </header>
  )
}

function MenuBar() {
  return (
    <nav className="flex h-[12px] shrink-0 items-center gap-[11px] border-y border-[#0c0c0c] bg-[#1c1c1c] px-[6px] text-[#d6d6d6]">
      {['File', 'Edit', 'Asset', 'View', 'Debug', 'Window', 'Help'].map((item) => (
        <button key={item} type="button">
          {item}
        </button>
      ))}
      <span className="ml-auto text-[#808080]">
        Parent class:
        <a href="#actor" className="ml-[5px] text-[#7eb0dc]">
          Actor
        </a>
      </span>
    </nav>
  )
}

function Taskbar() {
  const apps = [
    {
      name: 'Start',
      state: '',
      art: (
        <svg viewBox="0 0 10 10" className="size-[10px]" fill="#fff" aria-hidden>
          <path d="M0 1.5l4.3-.6v3.8H0zM4.9.8L10 0v4.7H4.9zM0 5.3h4.3v3.8L0 8.5zM4.9 5.3H10V10l-5.1-.8z" />
        </svg>
      ),
    },
    {
      name: 'Search',
      state: '',
      art: (
        <svg viewBox="0 0 10 10" className="size-[10px]" fill="none" stroke="#e6e6e6" aria-hidden>
          <circle cx="6" cy="4" r="3.2" />
          <path d="M3.7 6.3L.5 9.5" />
        </svg>
      ),
    },
    {
      name: 'Task View',
      state: '',
      art: (
        <svg viewBox="0 0 12 10" className="h-[10px] w-[12px]" fill="none" stroke="#d8d8d8" aria-hidden>
          <path d="M3 .5h6v9H3zM1.5 1.5h-1v7h1M10.5 1.5h1v7h-1" />
        </svg>
      ),
    },
    {
      name: 'Chrome',
      state: 'border-b-2 border-[#76b9ed] mx-[2px]',
      art: (
        <svg viewBox="0 0 14 14" className="size-[13px]" aria-hidden>
          <circle cx="7" cy="7" r="7" fill="#fbc116" />
          <path d="M7 7L.9 3.5A7 7 0 0113.1 3.5H7z" fill="#e33b2e" />
          <path d="M.9 3.5A7 7 0 006.5 14L10 8.8 7 7z" fill="#2ba24c" />
          <circle cx="7" cy="7" r="3.3" fill="#fff" />
          <circle cx="7" cy="7" r="2.6" fill="#4285f4" />
        </svg>
      ),
    },
    {
      name: 'Unreal Editor',
      state: 'border-b-2 border-[#76b9ed] bg-[#33383d]',
      art: (
        <span className="flex size-[13px] items-center justify-center rounded-full border border-[#ddd] bg-[#111] text-[#eee]">
          <UnrealLogo className="size-[10px]" />
        </span>
      ),
    },
    {
      name: 'File Explorer',
      state: 'border-b-2 border-[#76b9ed] mx-[2px]',
      art: (
        <svg viewBox="0 0 13 11" className="h-[11px] w-[13px]" aria-hidden>
          <path d="M0 .5h4.5L6 2h7v8.5H0z" fill="#f3cf62" />
          <path d="M0 3h13v7.5H0z" fill="#fce79a" />
          <path d="M2.5 10.5V6.5h8v4h-2v-2h-4v2z" fill="#38a5e5" />
        </svg>
      ),
    },
  ]
  return (
    <footer className="flex h-[23px] shrink-0 bg-[#020609] text-white">
      {apps.map((app) => (
        <div key={app.name} className="flex w-[28px]">
          <button type="button" aria-label={app.name} className={`flex flex-1 items-center justify-center ${app.state}`}>
            {app.art}
          </button>
        </div>
      ))}
      <div className="ml-auto flex items-center gap-[5px] border-r border-[#444] pr-[9px]">
        <svg viewBox="0 0 8 5" className="h-[5px] w-[8px]" fill="none" stroke="#eee" aria-hidden>
          <path d="M.5 4.5L4 1l3.5 3.5" />
        </svg>
        <svg viewBox="0 0 11 9" className="h-[9px] w-[11px]" fill="none" stroke="#ddd" aria-hidden>
          <path d="M3 1.5h7.5v5H3zM6.5 6.5v2M4 8.5h5M1 .5h2v3H1zM2 3.5v5" />
        </svg>
        <svg viewBox="0 0 10 9" className="mr-[3px] h-[9px] w-[10px]" fill="none" stroke="#ddd" aria-hidden>
          <path d="M.5 3h1.5L4.5 1v7L2 6H.5z" />
          <path d="M6 3q1 1.5 0 3" />
          <path d="M7.5 2q2 2.5 0 5" stroke="#666" />
        </svg>
        <div className="flex w-[36px] flex-col items-center leading-[10px]">
          <span>13:19</span>
          <span>21/05/2019</span>
        </div>
        <svg viewBox="0 0 15 14" className="ml-[3px] h-[14px] w-[15px]" aria-hidden>
          <path d="M1 1h10v8H5l-2 2V9H1z" fill="#f4f4f4" />
          <path d="M3 3.5h6M3 5.5h6" stroke="#555" strokeWidth=".8" />
          <circle cx="10" cy="9.5" r="4.2" fill="#333" stroke="#888" strokeWidth=".7" />
          <text x="8" y="12" fill="#fff" fontSize="7">
            1
          </text>
        </svg>
      </div>
    </footer>
  )
}

export default function App() {
  return (
    <div className="flex h-screen flex-col overflow-hidden bg-[#222] font-[Roboto,'Open_Sans',sans-serif] text-[7px] leading-[10px]">
      <TitleBar />
      <MenuBar />
      <main className="flex min-h-0 flex-1 pr-px">
        <div className="mr-[3px] flex w-[164px] shrink-0 flex-col gap-[3px]">
          <ComponentsPanel />
          <MyBlueprintPanel />
        </div>
        <div className="mr-[2px] flex min-w-0 flex-1 flex-col gap-[3px]">
          <Toolbar />
          <GraphArea />
          <CompilerResults />
        </div>
        <DetailsPanel />
      </main>
      <Taskbar />
    </div>
  )
}
